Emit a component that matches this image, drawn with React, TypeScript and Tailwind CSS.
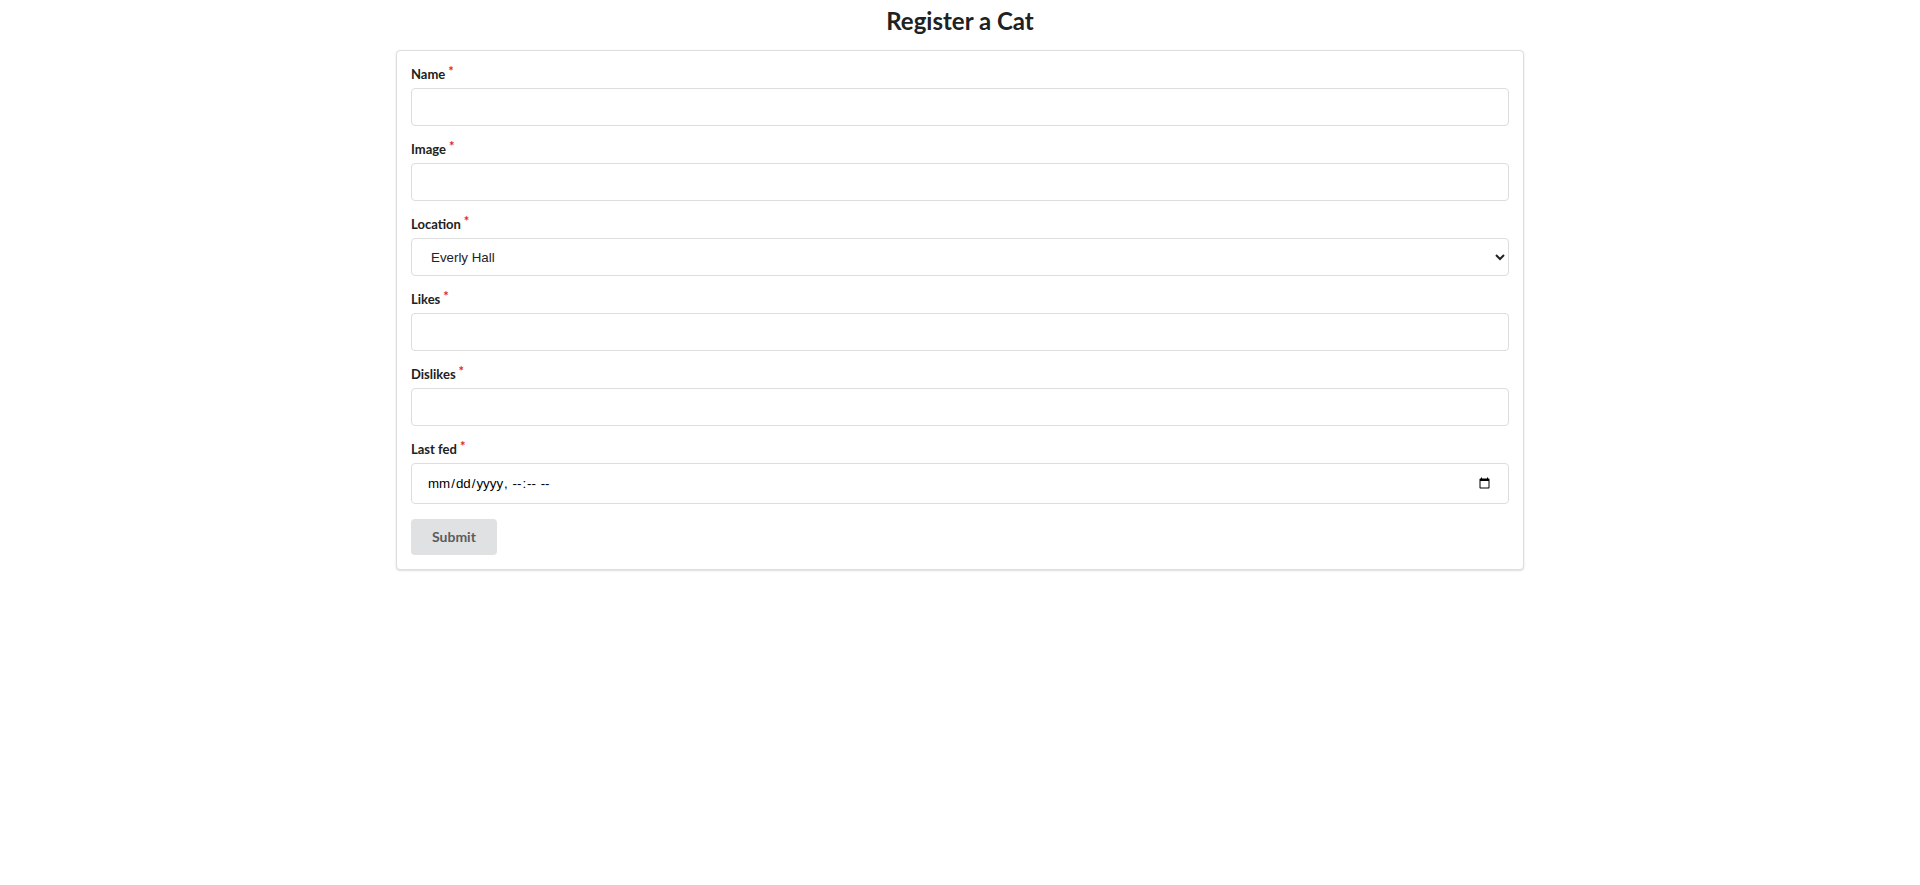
import React from 'react';

const fields = ['Name', 'Image'];

function Label({ text }: { text: string }) {
  return (
    <label className="block mb-[4px] text-[13px] leading-[20px] font-bold text-[#212121]">
      {text}
      <span className="inline-block align-top -mt-[3px] ml-[3px] text-[#db2828]">*</span>
    </label>
  );
}

function App() {
  const inputCls =
    "block w-full h-[38px] px-[15px] bg-white border border-[#dcddde] rounded-[4px] font-['Liberation_Sans',sans-serif] text-[13.333px] text-black outline-none";

  return (
    <div className="min-h-screen bg-white font-['Lato',sans-serif] text-[14px] text-[#212121]">
      <h2 className="pt-[5px] mb-[14px] text-center text-[24px] leading-[31px] font-bold">Register a Cat</h2>

      <form className="mx-auto w-[1128px] bg-white border border-[#dcddde] rounded-[4px] shadow-[0_1px_2px_0_rgba(34,36,38,0.15)] pt-[13px] pb-[14px] px-[14px]">
        {fields.map((f) => (
          <div key={f} className="mb-[13px]">
            <Label text={f} />
            <input type="text" className={inputCls} />
          </div>
        ))}

        <div className="mb-[13px]">
          <Label text="Location" />
          <select className="block w-full h-[38px] pl-[15px] pr-[4px] bg-white border border-[#dcddde] rounded-[4px] font-['Liberation_Sans',sans-serif] text-[13.333px] text-[#222] outline-none">
            <option>Everly Hall</option>
            <option>Bayside Dorm</option>
            <option>Main Library</option>
          </select>
        </div>

        {['Likes', 'Dislikes'].map((f) => (
          <div key={f} className="mb-[13px]">
            <Label text={f} />
            <input type="text" className={inputCls} />
          </div>
        ))}

        <div className="mb-[15px]">
          <Label text="Last fed" />
          <input
            type="datetime-local"
            className="block w-full h-[41px] px-[15px] bg-white border border-[#dcddde] rounded-[4px] font-['Liberation_Sans',sans-serif] text-[13.333px] text-black outline-none"
          />
        </div>

        <button
          type="button"
          className="block h-[36px] px-[21px] rounded-[4px] bg-[#e0e1e2] text-[14px] leading-[14px] font-bold text-[#5c5c5c]"
        >
          Submit
        </button>
      </form>
    </div>
  );
}

export default App;
